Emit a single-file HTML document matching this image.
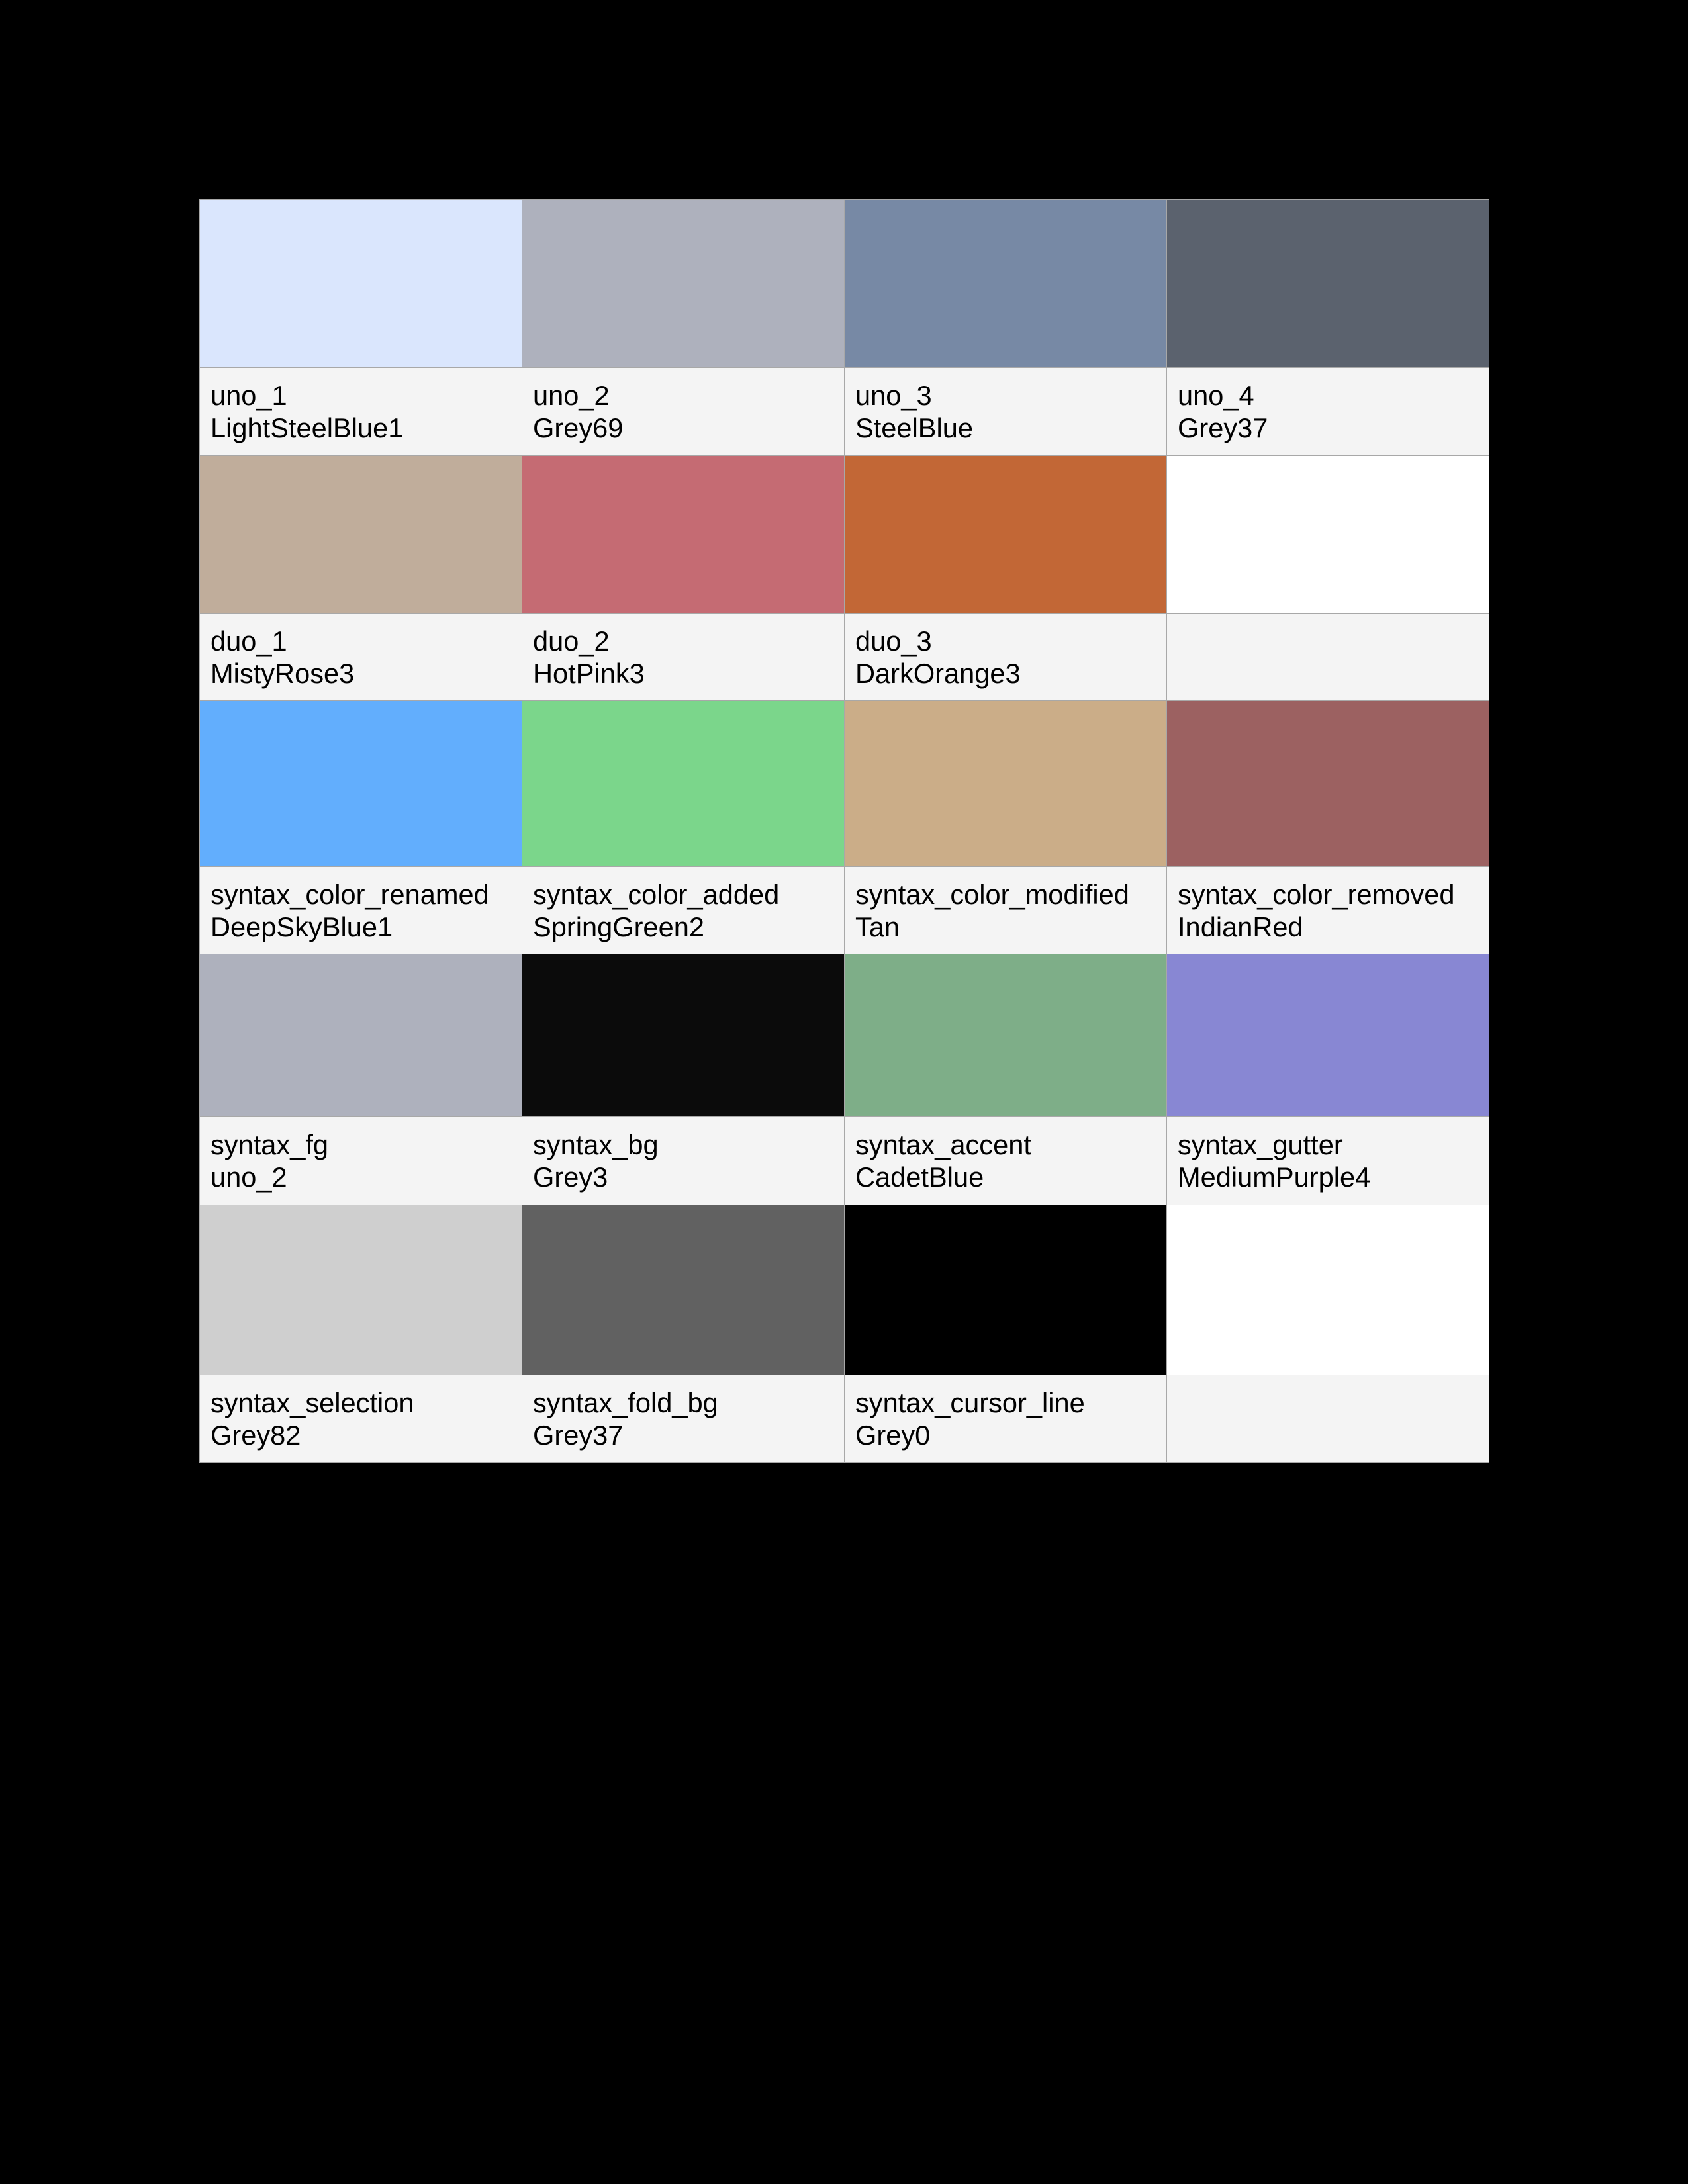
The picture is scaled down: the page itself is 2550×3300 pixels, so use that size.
<!DOCTYPE html>
<html><head><style>
body{margin:0;width:2550px;height:3300px;background:#000;position:relative;overflow:hidden;font-family:"Liberation Sans",sans-serif}
.c{position:absolute;box-sizing:border-box;border:1px solid #a8a8a8}
.l{background:#f4f4f4;font-size:41.6px;line-height:49px;color:#000;padding:17px 0 0 16px;white-space:nowrap}
</style></head><body>
<script>
const xs=[301,788,1275,1762,2249];
const ys=[301,555,688,926,1058,1309,1441,1687,1820,2077,2209];
const data=[
[["#dae6fd","uno_1","LightSteelBlue1"],["#aeb1bd","uno_2","Grey69"],["#7789a5","uno_3","SteelBlue"],["#5b626e","uno_4","Grey37"]],
[["#c0ad9b","duo_1","MistyRose3"],["#c56b73","duo_2","HotPink3"],["#c26736","duo_3","DarkOrange3"],["#ffffff","",""]],
[["#62aefd","syntax_color_renamed","DeepSkyBlue1"],["#7bd68b","syntax_color_added","SpringGreen2"],["#cbad88","syntax_color_modified","Tan"],["#9c6161","syntax_color_removed","IndianRed"]],
[["#aeb1bd","syntax_fg","uno_2"],["#0b0b0b","syntax_bg","Grey3"],["#7eae88","syntax_accent","CadetBlue"],["#8887d3","syntax_gutter","MediumPurple4"]],
[["#cfcfcf","syntax_selection","Grey82"],["#616161","syntax_fold_bg","Grey37"],["#000000","syntax_cursor_line","Grey0"],["#ffffff","",""]]
];
let h="";
data.forEach((row,r)=>row.forEach((d,c)=>{
const x=xs[c],w=xs[c+1]-x+1;
const y1=ys[2*r],y2=ys[2*r+1],y3=ys[2*r+2];
h+=`<div class="c" style="left:${x}px;top:${y1}px;width:${w}px;height:${y2-y1+1}px;background:${d[0]}"></div>`;
h+=`<div class="c l" style="left:${x}px;top:${y2}px;width:${w}px;height:${y3-y2+1}px">${d[1]}<br>${d[2]}</div>`;
}));
document.write(h);
</script>
</body></html>
